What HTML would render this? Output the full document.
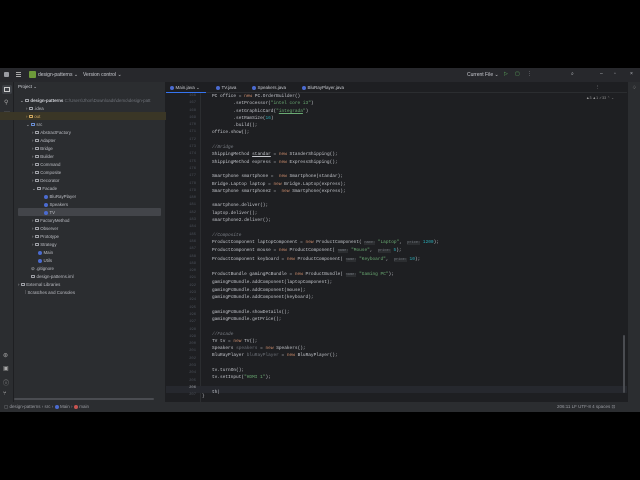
<!DOCTYPE html>
<html><head><meta charset="utf-8"><style>
*{margin:0;padding:0;box-sizing:border-box}
body{width:640px;height:480px;background:#000;position:relative;overflow:hidden;font-family:"Liberation Sans",sans-serif;color:#bcbec4}
.abs{position:absolute}
#title{left:0;top:68px;width:640px;height:14px;background:#27282c;font-size:5px;}
#left{left:0;top:82px;width:14px;height:320px;background:#2b2d30;border-right:1px solid #1e1f22}
#proj{left:14px;top:82px;width:152px;height:320px;background:#2b2d30;border-right:1px solid #1e1f22}
#ed{left:166px;top:82px;width:461px;height:320px;background:#1e1f22}
#right{left:627px;top:82px;width:13px;height:320px;background:#2b2d30;border-left:1px solid #1e1f22}
#status{left:0;top:402px;width:640px;height:10px;background:#2b2d30;font-size:4.5px;color:#9a9ca2}
.tree div{position:absolute;font-size:4.4px;white-space:nowrap;height:8px;line-height:8px}
.ic{display:inline-block;width:4px;height:3.5px;border:0.6px solid #a0a2a8;border-radius:0.5px;margin-right:1.5px;vertical-align:-0.3px}
.jc{display:inline-block;width:4px;height:4px;border-radius:50%;background:#4b6bd0;margin-right:1.5px;vertical-align:-0.5px}
.code{left:212px;top:93px;font-family:"Liberation Mono",monospace;font-size:4.47px;line-height:7.3px;white-space:pre;color:#c4c6cc}
.gut{left:166px;top:93px;width:30px;text-align:right;font-family:"Liberation Mono",monospace;font-size:3.8px;line-height:7.3px;color:#4b5059;white-space:pre}
.k{color:#cf8e6d}.s{color:#6aab73}.c{color:#7a7e85;font-style:italic}.h{color:#6f737a;background:#2b2d30;font-size:3.6px}.n{color:#2aacb8}.f{color:#c77dbb}
</style></head><body>
<div id="title" class="abs">
 <div class="abs" style="left:4px;top:4px;width:5px;height:5px;background:#9a9ca2;border-radius:1px"></div>
 <div class="abs" style="left:16px;top:4px;width:5px;height:1px;background:#aaa;box-shadow:0 2px #aaa,0 4px #aaa"></div>
 <div class="abs" style="left:29px;top:3px;width:7px;height:7px;background:#6e9a3a;border-radius:1px"></div>
 <div class="abs" style="left:38px;top:3.5px;color:#c8cad0">design-patterns ⌄</div>
 <div class="abs" style="left:83px;top:3.5px;color:#c8cad0">Version control ⌄</div>
 <div class="abs" style="left:467px;top:3.5px;color:#c8cad0">Current File ⌄</div>
 <div class="abs" style="left:504px;top:3px;color:#5fb35f">▷</div>
 <div class="abs" style="left:515px;top:3px;color:#5fb35f">▢</div>
 <div class="abs" style="left:527px;top:3px">⋮</div>
 <div class="abs" style="left:571px;top:3px">⌕</div>
 <div class="abs" style="left:600px;top:3px">–</div>
 <div class="abs" style="left:614px;top:3px">▫</div>
 <div class="abs" style="left:630px;top:3px">×</div>
</div>
<div id="left" class="abs">
 <div class="abs" style="left:2px;top:3px;width:10px;height:9px;background:#3d4045;border-radius:2px"></div>
 <div class="abs" style="left:4px;top:5px;width:6px;height:5px;border:0.7px solid #ccc"></div>
 <div class="abs" style="left:4px;top:17px;font-size:6px;color:#aaa">⚲</div>
 <div class="abs" style="left:4px;top:27px;font-size:6px;color:#aaa">⋯</div>
 <div class="abs" style="left:3px;top:270px;font-size:6px;color:#aaa">⊛</div>
 <div class="abs" style="left:3px;top:283px;font-size:6px;color:#aaa">▣</div>
 <div class="abs" style="left:3px;top:296px;font-size:6px;color:#aaa">ⓘ</div>
 <div class="abs" style="left:3px;top:309px;font-size:6px;color:#aaa">⑂</div>
</div>
<div id="proj" class="abs tree">
 <div style="left:4px;top:0;height:10px;line-height:10px;font-size:4.5px;color:#d0d2d8">Project ⌄</div>
 <div style="left:6px;top:15px;color:#d0d2d8">⌄ <span class="ic"></span><b>design-patterns</b> <span style="color:#6f737a">C:\Users\Jhon\Downloads\demo\design-patt</span></div>
 <div style="left:12px;top:23px">› <span class="ic"></span>.idea</div>
 <div style="left:-14px;top:30px;width:166px;height:8px;background:#3a3626"></div>
 <div style="left:12px;top:31px;color:#d0a860">› <span class="ic" style="border-color:#d0a860"></span>out</div>
 <div style="left:12px;top:39px">⌄ <span class="ic" style="border-color:#6b8fd6"></span>src</div>
 <div style="left:18px;top:47px">› <span class="ic"></span>AbstractFactory</div>
 <div style="left:18px;top:55px">› <span class="ic"></span>Adapter</div>
 <div style="left:18px;top:63px">› <span class="ic"></span>Bridge</div>
 <div style="left:18px;top:71px">› <span class="ic"></span>Builder</div>
 <div style="left:18px;top:79px">› <span class="ic"></span>Command</div>
 <div style="left:18px;top:87px">› <span class="ic"></span>Composite</div>
 <div style="left:18px;top:95px">› <span class="ic"></span>Decorator</div>
 <div style="left:18px;top:103px">⌄ <span class="ic"></span>Facade</div>
 <div style="left:30px;top:111px"><span class="jc"></span>BluRayPlayer</div>
 <div style="left:30px;top:119px"><span class="jc"></span>Speakers</div>
 <div style="left:4px;top:126px;width:143px;height:8px;background:#43454a;border-radius:1px"></div>
 <div style="left:30px;top:127px"><span class="jc"></span>TV</div>
 <div style="left:18px;top:135px">› <span class="ic"></span>FactoryMethod</div>
 <div style="left:18px;top:143px">› <span class="ic"></span>Observer</div>
 <div style="left:18px;top:151px">› <span class="ic"></span>Prototype</div>
 <div style="left:18px;top:159px">› <span class="ic"></span>Strategy</div>
 <div style="left:24px;top:167px"><span class="jc"></span>Main</div>
 <div style="left:24px;top:175px"><span class="jc"></span>Utils</div>
 <div style="left:17px;top:183px">⊘ .gitignore</div>
 <div style="left:17px;top:191px"><span class="ic"></span>design-patterns.iml</div>
 <div style="left:4px;top:199px">› <span class="ic"></span>External Libraries</div>
 <div style="left:11px;top:207px">⁞ Scratches and Consoles</div>
 <div style="left:0;top:316px;width:140px;height:2px;background:#4a4c51;border-radius:1px"></div>
</div>
<div id="ed" class="abs">
 <div class="abs" style="left:0;top:0;width:461px;height:11px;border-bottom:1px solid #2b2d30;font-size:4.5px;color:#c8cad0">
  <div class="abs" style="left:4px;top:3px"><span class="jc"></span>Main.java ⌄</div>
  <div class="abs" style="left:0;top:9.5px;width:40px;height:1.5px;background:#3574f0"></div>
  <div class="abs" style="left:50px;top:3px"><span class="jc"></span>TV.java</div>
  <div class="abs" style="left:86px;top:3px"><span class="jc"></span>Speakers.java</div>
  <div class="abs" style="left:136px;top:3px"><span class="jc"></span>BluRayPlayer.java</div>
  <div class="abs" style="left:430px;top:3px;font-size:3.5px">⋮</div>
 </div>
 <div class="abs" style="left:420px;top:14px;font-size:3.6px;color:#999">▲3 ▲1 ✓33 ⌃ ⌄</div>
 <div class="abs" style="left:34px;top:11px;width:0.6px;height:309px;background:#2b2d30"></div>
 <div class="abs" style="left:0;top:304px;width:461px;height:7px;background:#26282e"></div>
 <div class="abs" style="left:457px;top:253px;width:2px;height:58px;background:#4a4c51;border-radius:1px"></div>
</div>
<div class="abs gut">166
167
168
169
170
171
172
173
174
175
176
177
178
179
180
181
182
183
184
185
186
187
188
189
190
191
192
193
194
195
196
197
198
199
200
201
202
203
204
205
<span style="color:#a0a2a8">206</span>
207</div>
<div class="abs code">PC office = <span class="k">new</span> PC.OrderBuilder()
        .setProcessor(<span class="s">"intel core i3"</span>)
        .setGraphicCard(<span class="s">"<u>integrada</u>"</span>)
        .setRamSize(<span class="n">16</span>)
        .build();
office.show();

<span class="c">//Bridge</span>
ShippingMethod <u>standar</u> = <span class="k">new</span> StanderShipping();
ShippingMethod express = <span class="k">new</span> ExpressShipping();

Smartphone smartphone =  <span class="k">new</span> Smartphone(standar);
Bridge.Laptop laptop = <span class="k">new</span> Bridge.Laptop(express);
Smartphone smartphone2 =  <span class="k">new</span> Smartphone(express);

smartphone.deliver();
laptop.deliver();
smartphone2.deliver();

<span class="c">//Composite</span>
ProductComponent laptopComponent = <span class="k">new</span> ProductComponent( <span class="h">name:</span> <span class="s">"Laptop"</span>,  <span class="h">price:</span> <span class="n">1200</span>);
ProductComponent mouse = <span class="k">new</span> ProductComponent( <span class="h">name:</span> <span class="s">"Mouse"</span>,  <span class="h">price:</span> <span class="n">5</span>);
ProductComponent keyboard = <span class="k">new</span> ProductComponent( <span class="h">name:</span> <span class="s">"Keyboard"</span>,  <span class="h">price:</span> <span class="n">10</span>);

ProductBundle gamingPcBundle = <span class="k">new</span> ProductBundle( <span class="h">name:</span> <span class="s">"Gaming PC"</span>);
gamingPcBundle.addComponent(laptopComponent);
gamingPcBundle.addComponent(mouse);
gamingPcBundle.addComponent(keyboard);

gamingPcBundle.showDetails();
gamingPcBundle.getPrice();

<span class="c">//Facade</span>
TV tv = <span class="k">new</span> TV();
Speakers <span style="color:#6f737a">speakers</span> = <span class="k">new</span> Speakers();
BluRayPlayer <span style="color:#6f737a">bluRayPlayer</span> = <span class="k">new</span> BluRayPlayer();

tv.turnOn();
tv.setInput(<span class="s">"HDMI 1"</span>);

th|
</div>
<div class="abs" style="left:202px;top:393px;font-family:'Liberation Mono',monospace;font-size:4.47px;line-height:7.3px">}</div>
<div id="right" class="abs"><div class="abs" style="left:4px;top:3px;font-size:5px;color:#aaa">♢</div></div>
<div id="status" class="abs">
 <div class="abs" style="left:4px;top:2px">▢ design-patterns  ›  src  ›  <span class="jc"></span>Main  ›  <span class="jc" style="background:#c75450"></span>main</div>
 <div class="abs" style="left:557px;top:2px">206:11   LF   UTF-8   4 spaces   ⊡</div>
</div>
</body></html>
